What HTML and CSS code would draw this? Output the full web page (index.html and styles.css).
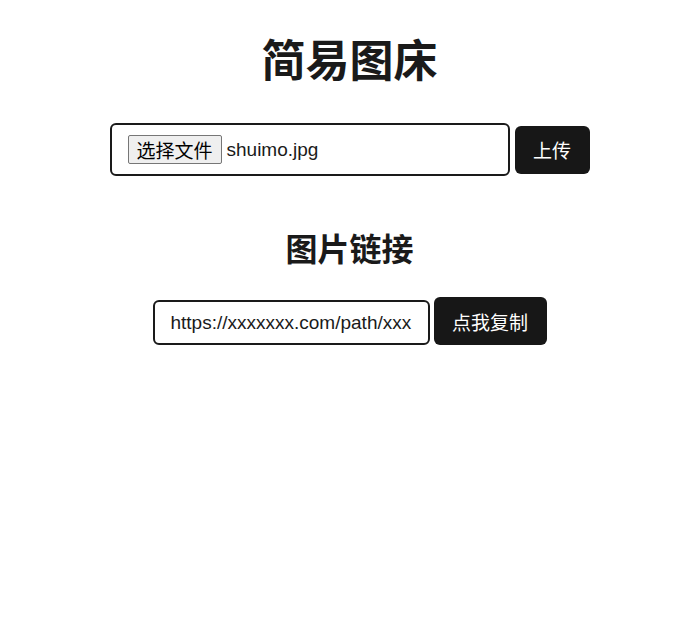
FILE: index.html
```html
<!DOCTYPE html>
<html lang="zh-CN">
<head>
<meta charset="utf-8">
<title>简易图床</title>
<link rel="stylesheet" href="styles.css">
</head>
<body>
<main class="page">
  <h1 class="title">简易图床</h1>
  <form class="upload-row">
    <label class="file-box">
      <span class="file-btn">选择文件</span>
      <span class="file-name">shuimo.jpg</span>
    </label>
    <button type="button" class="btn btn-upload">上传</button>
  </form>
  <h2 class="subtitle">图片链接</h2>
  <div class="link-row">
    <input class="link-input" type="text" readonly value="https://xxxxxxx.com/path/xxx.jpg">
    <button type="button" class="btn btn-copy">点我复制</button>
  </div>
</main>
</body>
</html>
```
FILE: styles.css
```css
html, body {
  margin: 0;
  padding: 0;
  background: #ffffff;
}
body {
  font-family: "Liberation Sans", "Noto Sans CJK SC", sans-serif;
  color: #1a1a1a;
}
.page {
  display: flex;
  flex-direction: column;
  align-items: center;
  padding-top: 34px;
  padding-left: 2px;
}
.title {
  margin: 0;
  font-size: 44px;
  font-weight: 700;
  line-height: 56px;
  color: #1a1a1a;
}
.upload-row {
  margin: 33px 0 0;
  display: flex;
  align-items: center;
  gap: 5px;
}
.file-box {
  box-sizing: border-box;
  width: 400px;
  height: 53px;
  border: 2px solid #1a1a1a;
  border-radius: 6px;
  display: flex;
  align-items: center;
  padding: 0 16px;
  gap: 5px;
  font-size: 19px;
}
.file-btn {
  box-sizing: border-box;
  height: 29px;
  display: inline-flex;
  align-items: center;
  padding: 0 8px;
  background: #efefef;
  border: 1px solid #767676;
  border-radius: 2px;
  color: #000;
  font-size: 19px;
}
.file-name {
  color: #1a1a1a;
}
.btn {
  box-sizing: border-box;
  height: 48px;
  border: none;
  border-radius: 6px;
  background: #171717;
  color: #ffffff;
  font-family: inherit;
  font-size: 19px;
  padding: 0 18px;
  cursor: pointer;
}
.btn-upload {
  width: 75px;
  padding: 0;
}
.btn-copy {
  width: 113px;
  padding: 0;
}
.subtitle {
  margin: 53px 0 0;
  font-size: 32px;
  font-weight: 700;
  line-height: 42px;
  color: #1a1a1a;
}
.link-row {
  margin-top: 26px;
  display: flex;
  align-items: flex-end;
  gap: 4px;
}
.link-input {
  box-sizing: border-box;
  width: 277px;
  height: 45px;
  border: 2px solid #1a1a1a;
  border-radius: 6px;
  padding: 0 16px;
  font-family: inherit;
  font-size: 19px;
  color: #1a1a1a;
  outline: none;
}
```
